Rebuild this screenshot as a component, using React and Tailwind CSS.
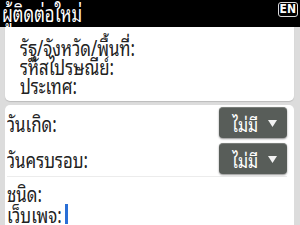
const ROWS_TOP = ['รัฐ/จังหวัด/พื้นที่:', 'รหัสไปรษณีย์:', 'ประเทศ:']

// Thai glyphs on the device are tall and narrow, so each label is squeezed sideways
const squeeze = 'inline-block origin-left scale-x-[0.8] whitespace-nowrap'

function Picker() {
  return (
    <div className="flex h-[31px] w-[68px] items-center justify-center gap-[6px] rounded-[4px] border-t border-[#7a7e7a] bg-[#585d59] text-[20px] text-white shadow-[0_1px_2px_rgba(0,0,0,0.45)]">
      <span className="inline-block origin-center scale-x-[0.8]">ไม่มี</span>
      <svg width="9" height="7" viewBox="0 0 9 7" className="mt-[1px]">
        <path d="M0 0h9L4.5 7z" fill="#f2f2f2" />
      </svg>
    </div>
  )
}

export default function App() {
  return (
    <div className="h-[225px] w-[300px] overflow-hidden bg-[#dcdcdc] font-['Noto_Sans_Thai_Looped','Noto_Sans',sans-serif] text-[#222]">
      <div className="flex h-[27px] items-start justify-between bg-black pl-[2px] pr-[2px]">
        <span className={`${squeeze} origin-left scale-x-[0.76] text-[22px] leading-[24px] text-white`}>ผู้ติดต่อใหม่</span>
        <span className="mt-[2px] rounded-[3px] border border-[#ddd] px-[1px] font-['DejaVu_Sans_Condensed',sans-serif] text-[12px] font-bold leading-[13px] text-white">EN</span>
      </div>
      <div className="ml-[5px] mr-[6px] rounded-b-[5px] bg-white pb-[7px] pl-[15px] pt-[10px] shadow-[0_1px_1px_rgba(0,0,0,0.15)]">
        {ROWS_TOP.map((t) => (
          <p key={t} className="text-[21px] leading-[19px]">
            <span className={squeeze}>{t}</span>
          </p>
        ))}
      </div>
      <div className="ml-[5px] mr-[6px] mt-[4px] h-[130px] rounded-t-[5px] bg-white pl-[2px] pr-[7px] pt-[2px]">
        <div className="flex items-center justify-between">
          <span className={`${squeeze} text-[21px]`}>วันเกิด:</span>
          <Picker />
        </div>
        <div className="mt-[4px] flex items-center justify-between border-b border-[#ececec] pb-[2px]">
          <span className={`${squeeze} text-[21px]`}>วันครบรอบ:</span>
          <Picker />
        </div>
        <p className="mt-[6px] text-[21px] leading-[20px]">
          <span className={squeeze}>ชนิด:</span>
        </p>
        <p className="mt-[1px] flex items-center text-[21px] leading-[20px]">
          <span className={squeeze}>เว็บเพจ:</span>
          <span className="-ml-[11px] inline-block h-[20px] w-[3px] bg-[#2a6fd6]"></span>
        </p>
      </div>
    </div>
  )
}
